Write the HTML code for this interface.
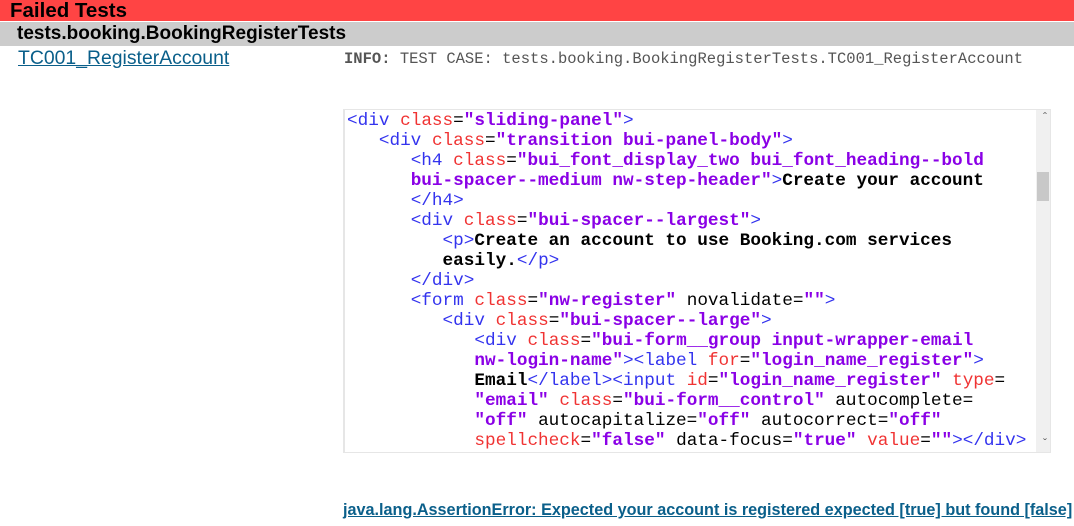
<!DOCTYPE html>
<html><head><meta charset="utf-8"><style>
*{margin:0;padding:0}
body{width:1074px;height:526px;overflow:hidden;background:#fff;font-family:"Liberation Sans",sans-serif;position:relative}
.bar{position:absolute;left:0;top:0;width:1074px;height:21px;background:#ff4444;font-weight:bold;font-size:20.5px;line-height:21px;padding-left:10px;box-sizing:border-box;color:#000}
.sub{position:absolute;left:0;top:22px;width:1074px;height:24px;background:#cccccc;font-weight:bold;font-size:19px;line-height:24px;padding-left:17px;box-sizing:border-box}
.tc{position:absolute;left:18px;top:47px;font-size:19.4px;color:#0a5f8a;text-decoration:underline}
.info{position:absolute;left:344px;top:50px;font-family:"Liberation Mono",monospace;font-size:15.5px;color:#555}
.info b{color:#555}
.box{position:absolute;left:343px;top:109px;width:705px;height:342px;border:1px solid #e6e6e6;border-left:2px solid #e6e6e6;box-sizing:content-box;overflow:hidden}
.sb{position:absolute;right:0;top:0;width:14px;height:342px;background:#f0f0f0}
.th{position:absolute;right:1px;top:62px;width:12px;height:29px;background:#c8c8c8}
.ar{position:absolute;right:3px;font-size:12px;color:#666}
.code{position:absolute;left:2px;top:1px;font-family:"Liberation Mono",monospace;font-size:17.7px;line-height:20px;white-space:pre;color:#000}
.t{color:#3333ee}.a{color:#f03333}.v{color:#8a00e6;font-weight:bold}.x{font-weight:bold}
.err{position:absolute;left:343px;top:500px;font-size:17px;color:#0a5f8a;text-decoration:underline;font-weight:bold;transform:scaleX(0.953);transform-origin:0 0;white-space:nowrap}
</style></head><body>
<div class="bar">Failed Tests</div>
<div class="sub">tests.booking.BookingRegisterTests</div>
<div class="tc">TC001_RegisterAccount</div>
<div class="info"><b>INFO:</b> TEST CASE: tests.booking.BookingRegisterTests.TC001_RegisterAccount</div>
<div class="box">
<div class="code"><span class="t">&lt;div</span> <span class="a">class</span>=<span class="v">"sliding-panel"</span><span class="t">&gt;</span>
   <span class="t">&lt;div</span> <span class="a">class</span>=<span class="v">"transition bui-panel-body"</span><span class="t">&gt;</span>
      <span class="t">&lt;h4</span> <span class="a">class</span>=<span class="v">"bui_font_display_two bui_font_heading--bold</span>
      <span class="v">bui-spacer--medium nw-step-header"</span><span class="t">&gt;</span><span class="x">Create your account</span>
      <span class="t">&lt;/h4&gt;</span>
      <span class="t">&lt;div</span> <span class="a">class</span>=<span class="v">"bui-spacer--largest"</span><span class="t">&gt;</span>
         <span class="t">&lt;p&gt;</span><span class="x">Create an account to use Booking.com services</span>
         <span class="x">easily.</span><span class="t">&lt;/p&gt;</span>
      <span class="t">&lt;/div&gt;</span>
      <span class="t">&lt;form</span> <span class="a">class</span>=<span class="v">"nw-register"</span> novalidate=<span class="v">""</span><span class="t">&gt;</span>
         <span class="t">&lt;div</span> <span class="a">class</span>=<span class="v">"bui-spacer--large"</span><span class="t">&gt;</span>
            <span class="t">&lt;div</span> <span class="a">class</span>=<span class="v">"bui-form__group input-wrapper-email</span>
            <span class="v">nw-login-name"</span><span class="t">&gt;&lt;label</span> <span class="a">for</span>=<span class="v">"login_name_register"</span><span class="t">&gt;</span>
            <span class="x">Email</span><span class="t">&lt;/label&gt;&lt;input</span> <span class="a">id</span>=<span class="v">"login_name_register"</span> <span class="a">type</span>=
            <span class="v">"email"</span> <span class="a">class</span>=<span class="v">"bui-form__control"</span> autocomplete=
            <span class="v">"off"</span> autocapitalize=<span class="v">"off"</span> autocorrect=<span class="v">"off"</span>
            <span class="a">spellcheck</span>=<span class="v">"false"</span> data-focus=<span class="v">"true"</span> <span class="a">value</span>=<span class="v">""</span><span class="t">&gt;&lt;/div&gt;</span></div>
<div class="sb"><span class="ar" style="top:0px">&#710;</span><div class="th"></div><span class="ar" style="top:326px">&#711;</span></div>
</div>
<div class="err">java.lang.AssertionError: Expected your account is registered expected [true] but found [false]</div>
</body></html>
